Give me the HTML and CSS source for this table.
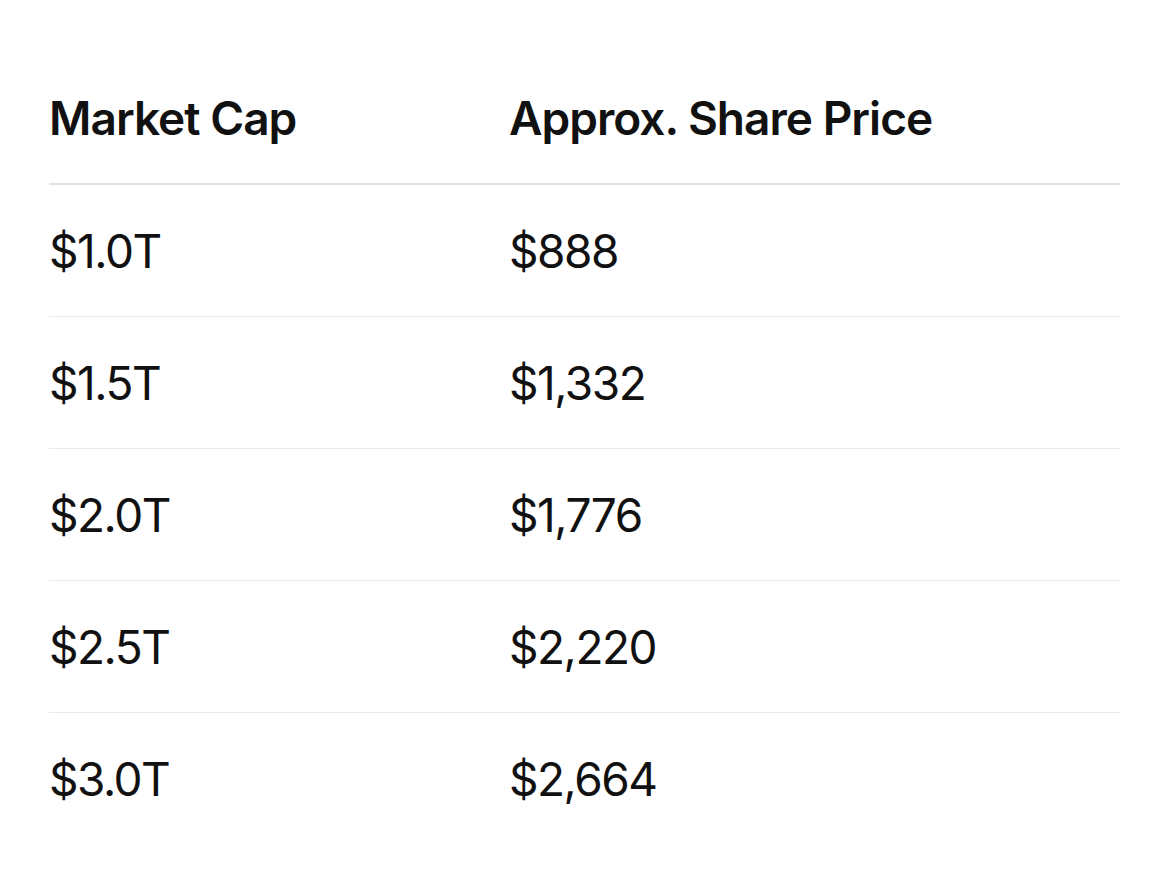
FILE: index.html
```html
<!DOCTYPE html>
<html>
<head>
<meta charset="utf-8">
<link rel="stylesheet" href="styles.css">
</head>
<body>
<div class="table">
  <div class="row head"><div class="c1">Market Cap</div><div class="c2">Approx. Share Price</div></div>
  <div class="row"><div class="c1">$1.0T</div><div class="c2">$888</div></div>
  <div class="row"><div class="c1">$1.5T</div><div class="c2">$1,332</div></div>
  <div class="row"><div class="c1">$2.0T</div><div class="c2">$1,776</div></div>
  <div class="row"><div class="c1">$2.5T</div><div class="c2">$2,220</div></div>
  <div class="row last"><div class="c1">$3.0T</div><div class="c2">$2,664</div></div>
</div>
</body>
</html>
```
FILE: styles.css
```css
html, body { margin: 0; padding: 0; background: #fff; }
body { font-family: Inter, "Noto Sans", sans-serif; color: #111; }
.table { margin: 53px 49px 0 49px; width: 1071px; }
.row {
  display: grid;
  grid-template-columns: 460px 1fr;
  height: 131px;
  align-items: center;
  border-bottom: 1px solid #ebebeb;
  font-size: 46px;
  font-weight: 400;
  letter-spacing: -0.032em;
}
.row.head { font-weight: 600; border-bottom: 2px solid #e2e2e2; height: 130px; letter-spacing: -0.021em; }
.row.last { border-bottom: none; }
```
